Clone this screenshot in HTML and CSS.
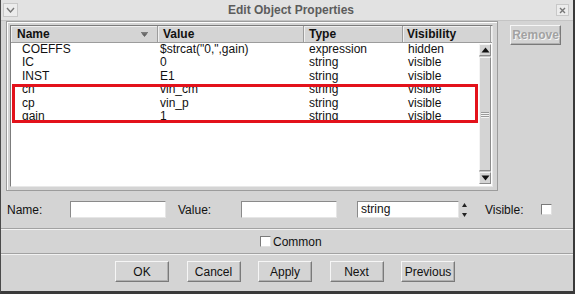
FILE: index.html
```html
<!DOCTYPE html>
<html lang="en">
<head>
  <meta charset="UTF-8" />
  <title>Edit Object Properties</title>
  <link rel="stylesheet" href="styles.css">
</head>
<body>
  <div class="janela">
    <!-- Barra de titulo -->
    <div class="titulo">
      <span class="botao-titulo menu">
        <svg width="9" height="6" viewBox="0 0 9 6"><path d="M1 1 L4.5 5 L8 1" fill="none" stroke="#777" stroke-width="1.4"/></svg>
      </span>
      <span class="titulo-texto">Edit Object Properties</span>
      <span class="botao-titulo fechar">
        <svg width="7" height="7" viewBox="0 0 7 7"><path d="M1 1 L6 6 M6 1 L1 6" stroke="#777" stroke-width="1.4"/></svg>
      </span>
    </div>

    <!-- Tabela de propriedades -->
    <div class="principal">
      <div class="moldura">
        <div class="lista">
          <div class="cabecalho">
            <div class="col col-nome">Name
              <svg class="seta-ordem" width="7" height="5" viewBox="0 0 7 5"><path d="M0 0.5 H7 M1 1.5 L3.5 4.5 L6 1.5 Z" fill="#666" stroke="#666" stroke-width="0.8"/></svg>
            </div>
            <div class="col col-valor">Value</div>
            <div class="col col-tipo">Type</div>
            <div class="col col-vis">Visibility</div>
            <div class="col col-resto"></div>
          </div>
          <div class="corpo">
            <div class="linhas">
              <div class="linha"><span class="c-nome">COEFFS</span><span class="c-valor">$strcat("0,",gain)</span><span class="c-tipo">expression</span><span class="c-vis">hidden</span></div>
              <div class="linha"><span class="c-nome">IC</span><span class="c-valor">0</span><span class="c-tipo">string</span><span class="c-vis">visible</span></div>
              <div class="linha"><span class="c-nome">INST</span><span class="c-valor">E1</span><span class="c-tipo">string</span><span class="c-vis">visible</span></div>
              <div class="linha"><span class="c-nome">cn</span><span class="c-valor">vin_cm</span><span class="c-tipo">string</span><span class="c-vis">visible</span></div>
              <div class="linha"><span class="c-nome">cp</span><span class="c-valor">vin_p</span><span class="c-tipo">string</span><span class="c-vis">visible</span></div>
              <div class="linha"><span class="c-nome">gain</span><span class="c-valor">1</span><span class="c-tipo">string</span><span class="c-vis">visible</span></div>
              <!-- destaque vermelho sobre as tres ultimas linhas -->
              <div class="destaque"></div>
            </div>
            <div class="rolagem">
              <div class="seta-rolagem">
                <svg width="9" height="6" viewBox="0 0 9 6"><path d="M0.5 5.5 L4.5 0.5 L8.5 5.5 Z" fill="#111"/></svg>
              </div>
              <div class="trilho">
                <div class="alca">
                  <span></span><span></span><span></span>
                </div>
              </div>
              <div class="seta-rolagem">
                <svg width="9" height="6" viewBox="0 0 9 6"><path d="M0.5 0.5 L8.5 0.5 L4.5 5.5 Z" fill="#111"/></svg>
              </div>
            </div>
          </div>
        </div>
      </div>
      <div class="lateral">
        <button class="botao remover" disabled>Remove</button>
      </div>
    </div>

    <!-- Campos de edicao -->
    <div class="campos">
      <label class="rotulo r-nome">Name:</label>
      <input class="entrada e-nome" type="text" />
      <label class="rotulo r-valor">Value:</label>
      <input class="entrada e-valor" type="text" />
      <div class="entrada combo">string</div>
      <div class="spinner">
        <svg width="5" height="18" viewBox="0 0 5 18"><path d="M0 6 L2.5 2 L5 6 Z M0 12 L5 12 L2.5 16 Z" fill="#222"/></svg>
      </div>
      <label class="rotulo r-vis">Visible:</label>
      <span class="caixa"></span>
    </div>

    <div class="separador"></div>

    <div class="comum">
      <span class="caixa"></span>
      <span>Common</span>
    </div>

    <div class="separador"></div>

    <!-- Botoes de acao -->
    <div class="acoes">
      <button class="botao">OK</button>
      <button class="botao">Cancel</button>
      <button class="botao">Apply</button>
      <button class="botao">Next</button>
      <button class="botao">Previous</button>
    </div>
  </div>
</body>
</html>
```

FILE: styles.css
```css
:root {
  --fundo: #d4d4d4;
  --escuro: #8c8c8c;
  --claro: #f4f4f4;
  --texto: #111111;
}

* {
  box-sizing: border-box;
  margin: 0;
  padding: 0;
}

body {
  font-family: 'Liberation Sans', Arial, sans-serif;
  font-size: 12px;
  color: var(--texto);
  background: #ffffff;
}

.janela {
  width: 575px;
  height: 294px;
  background: var(--fundo);
  border-left: 1px solid #4a4a4a;
  border-right: 2px solid #3a3a3a;
  border-bottom: 3px solid #3a3a3a;
  display: flex;
  flex-direction: column;
}

/* Barra de titulo */
.titulo {
  height: 21px;
  background: #e2e2e2;
  border-bottom: 1px solid #c4c4c4;
  display: flex;
  align-items: center;
  padding: 0 4px 0 2px;
}

.botao-titulo {
  width: 15px;
  height: 14px;
  display: flex;
  align-items: center;
  justify-content: center;
  background: #ececec;
  border: 1px solid #c8c8c8;
}

.titulo-texto {
  flex: 1;
  text-align: center;
  font-weight: bold;
  font-size: 12px;
  color: #5c5c5c;
  padding-left: 8px;
}

.fechar {
  width: 13px;
  height: 12px;
}

/* Area principal */
.principal {
  display: flex;
  height: 170px;
}

.moldura {
  margin-left: 5px;
  width: 492px;
  height: 170px;
  border: 1px solid #9c9c9c;
  box-shadow: inset 1px 1px 0 #ffffff;
  padding: 3px 4px 3px 3px;
}

.lista {
  height: 100%;
  background: #ffffff;
  border-top: 1px solid #7c7c7c;
  border-left: 1px solid #7c7c7c;
  border-right: 1px solid #e8e8e8;
  border-bottom: 1px solid #e8e8e8;
  display: flex;
  flex-direction: column;
}

.cabecalho {
  display: flex;
  height: 17px;
  background: var(--fundo);
  font-weight: bold;
}

.col {
  display: flex;
  align-items: center;
  border-right: 1px solid #9c9c9c;
  box-shadow: inset 1px 1px 0 #f0f0f0;
  border-bottom: 1px solid #9c9c9c;
}

.col-nome {
  width: 147px;
  padding-left: 6px;
  position: relative;
}

.seta-ordem {
  position: absolute;
  right: 9px;
  top: 6px;
}

.col-valor {
  width: 146px;
  padding-left: 5px;
}

.col-tipo {
  width: 99px;
  padding-left: 5px;
}

.col-vis {
  width: 88px;
  padding-left: 4px;
}

.col-resto {
  flex: 1;
  border-right: none;
}

.corpo {
  flex: 1;
  display: flex;
}

.linhas {
  flex: 1;
  position: relative;
}

.linha {
  display: flex;
  height: 13.4px;
  line-height: 13.4px;
}

.c-nome {
  width: 147px;
  padding-left: 11px;
}

.c-valor {
  width: 146px;
  padding-left: 2px;
}

.c-tipo {
  width: 99px;
  padding-left: 5px;
}

.c-vis {
  padding-left: 5px;
}

.destaque {
  position: absolute;
  left: 1px;
  top: 41px;
  width: 466px;
  height: 39px;
  border: 3px solid #e3121b;
}

/* Barra de rolagem */
.rolagem {
  width: 12px;
  margin-right: 1px;
  margin-top: 1px;
  margin-bottom: 2px;
  background: #c6c6c6;
  display: flex;
  flex-direction: column;
}

.seta-rolagem {
  height: 12px;
  display: flex;
  align-items: center;
  justify-content: center;
  background: var(--fundo);
  border-top: 1px solid var(--claro);
  border-left: 1px solid var(--claro);
  border-right: 1px solid var(--escuro);
  border-bottom: 1px solid var(--escuro);
}

.trilho {
  flex: 1;
  display: flex;
}

.alca {
  flex: 1;
  margin: 1px 0;
  background: var(--fundo);
  border-top: 1px solid var(--claro);
  border-left: 1px solid var(--claro);
  border-right: 1px solid var(--escuro);
  border-bottom: 1px solid var(--escuro);
  display: flex;
  flex-direction: column;
  justify-content: center;
  gap: 1px;
  padding: 0 1px;
}

.alca span {
  height: 1px;
  background: #9a9a9a;
  box-shadow: 0 1px 0 #f4f4f4;
}

.lateral {
  flex: 1;
  padding: 4px 0 0 12px;
}

/* Botoes */
.botao {
  font-family: 'Liberation Sans', Arial, sans-serif;
  font-size: 12px;
  color: var(--texto);
  background: var(--fundo);
  border-top: 1px solid #f6f6f6;
  border-left: 1px solid #f6f6f6;
  border-right: 1px solid #7a7a7a;
  border-bottom: 1px solid #7a7a7a;
  box-shadow: inset -1px -1px 0 #b0b0b0;
  width: 54px;
  height: 21px;
}

.remover {
  width: 51px;
  height: 20px;
  font-weight: bold;
  color: #a2a2a2;
  text-shadow: 1px 1px 0 #f6f6f6;
}

/* Campos de edicao */
.campos {
  height: 37px;
  display: flex;
  align-items: center;
  padding-left: 6px;
}

.rotulo {
  display: block;
}

.r-nome {
  width: 63px;
}

.entrada {
  height: 17px;
  background: #ffffff;
  border-top: 1px solid #8a8a8a;
  border-left: 1px solid #8a8a8a;
  border-right: 1px solid #e6e6e6;
  border-bottom: 1px solid #e6e6e6;
  font-family: 'Liberation Sans', Arial, sans-serif;
  font-size: 12px;
  outline: none;
}

.e-nome {
  width: 96px;
}

.r-valor {
  margin-left: 12px;
  width: 63px;
}

.e-valor {
  width: 96px;
}

.combo {
  margin-left: 20px;
  width: 102px;
  padding-left: 3px;
  line-height: 15px;
}

.spinner {
  margin-left: 3px;
  width: 6px;
  display: flex;
  align-items: center;
}

.r-vis {
  margin-left: 17px;
  width: 56px;
}

.caixa {
  display: block;
  width: 11px;
  height: 11px;
  background: #ffffff;
  border-top: 1px solid #7a7a7a;
  border-left: 1px solid #7a7a7a;
  border-right: 1px solid #e0e0e0;
  border-bottom: 1px solid #e0e0e0;
}

.separador {
  height: 2px;
  border-top: 1px solid #a2a2a2;
  border-bottom: 1px solid #f2f2f2;
}

.comum {
  height: 23px;
  display: flex;
  align-items: center;
  gap: 2px;
  padding-left: 259px;
}

.acoes {
  flex: 1;
  display: flex;
  align-items: center;
  gap: 17.5px;
  padding-left: 114px;
  padding-bottom: 3px;
}
```
